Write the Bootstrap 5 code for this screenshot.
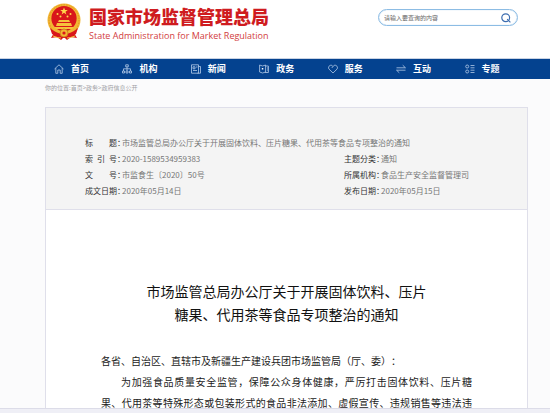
<!DOCTYPE html>
<html lang="zh-CN">
<head>
<meta charset="utf-8">
<meta name="viewport" content="width=device-width, initial-scale=1">
<title>国家市场监督管理总局</title>
<link rel="stylesheet" href="https://cdn.jsdelivr.net/npm/bootstrap@5.3.0/dist/css/bootstrap.min.css">
<style>
body{font-family:"Noto Sans CJK SC",sans-serif;font-size:8px;line-height:16px;color:#222;background:#fbfbfc}
.site-col{margin-left:45px;margin-right:22px}
.site-head{height:58px;background:#fff}
.emblem{width:34px;height:38px;margin:3px 8px 0 2px}
.site-name{font-size:18px;line-height:26px;font-weight:900;color:#cf1b20;margin-top:3px}
.site-en{font-family:"Open Sans",sans-serif;font-size:9px;line-height:13px;color:#d23c3e}
.search-box{width:140px;height:17px;margin:9px 10px 0 0;border:1px solid #8cbce4;box-shadow:inset 0 0 1px #8cbce4;background:#fff;padding:0 6px 0 5px}
.search-box input{font-size:6px;line-height:10px;color:#555;min-width:0}
.search-box input::placeholder{color:#666;opacity:1}
.search-box input:focus{outline:0}
.search-box svg{width:10px;height:10px}
.main-nav{background:#04428f;border-top:1px solid #c9d3e3;height:21px}
.main-nav ul{padding-right:4px}
.main-nav a{font-size:9px;line-height:20px;font-weight:700;color:#fff;padding-left:9px;gap:7px}
.main-nav svg{width:10px;height:10px;fill:none;stroke:#b5cbe8;stroke-width:.8}
.crumbs{font-size:6px;line-height:18px;height:28px;color:#a0a0a4}
.crumbs a{color:inherit}
.doc-box{border:1px solid #dfdfea;border-bottom:0;background:#fff}
.doc-meta{background:#f4f4f4;border-bottom:1px solid #dfdfea;padding:27px 20px 10px 39px}
.doc-meta table{table-layout:fixed}
.doc-meta th,.doc-meta td{padding:0;white-space:nowrap}
.doc-meta th{font-weight:400;color:#333;font-feature-settings:"halt"}
.doc-meta td{color:#777}
.doc-meta .c-key{width:37px}
.doc-meta .c-val{width:222px}
.key-text{display:inline-block;width:32px;text-align-last:justify;vertical-align:top}
.doc-title{font-size:14px;line-height:23px;color:#111;margin:70px 0 24px}
.doc-text{font-size:10px;line-height:21px;color:#222;padding:0 55px;text-spacing-trim:space-all}
.doc-text p{margin:0}
.full-line{text-align-last:justify}
.indented{text-indent:20px}
.status-strip{height:5px;background:#efeff6;border-top:1px solid #dcdce8}
</style>
<script src="https://cdn.jsdelivr.net/npm/bootstrap@5.3.0/dist/js/bootstrap.bundle.min.js"></script>
</head>
<body class="d-flex flex-column vh-100 overflow-hidden">
<header class="flex-shrink-0">
  <div class="site-head">
    <div class="site-col d-flex align-items-start">
      <svg class="emblem flex-shrink-0" viewBox="0 0 34 38" aria-hidden="true">
        <path d="M8 28 4 35 10 34 14 37 17 34 20 37 24 34 30 35 26 28Z" fill="#d8161b"/>
        <ellipse cx="17" cy="17" rx="16.500" ry="16.500" fill="#f2b632"/>
        <ellipse cx="17" cy="17" rx="15" ry="15.200" fill="none" stroke="#d98a1e" stroke-width=".8" stroke-dasharray="1.500 1.200"/>
        <circle cx="17" cy="15.500" r="12.600" fill="#d9161b"/>
        <path d="m17 4.500 1 2.600h2.800l-2.300 1.700.9 2.700-2.400-1.700-2.400 1.700.9-2.700-2.300-1.700H16Z" fill="#ffd84c"/>
        <g fill="#ffd84c"><circle cx="10.500" cy="11" r="1"/><circle cx="13.500" cy="13.500" r="1"/><circle cx="20.500" cy="13.500" r="1"/><circle cx="23.500" cy="11" r="1"/></g>
        <path d="M12 17h10l1 2H11ZM10 20h14l1 3H9ZM7 24h20l-2 2H9Z" fill="#f7c33c"/>
        <path d="M3 25q7 6 14 6t14-6l-2 6q-6 4-12 4T5 31Z" fill="#d9161b"/>
        <circle cx="17" cy="30" r="4" fill="#f2b632" stroke="#c97a18" stroke-width=".8"/>
        <circle cx="17" cy="30" r="1.600" fill="#d9161b"/>
        <path d="M6 33q5 2 8 2M28 33q-5 2-8 2" stroke="#f5c038" stroke-width="1" fill="none"/>
      </svg>
      <div class="text-nowrap">
        <div class="site-name">国家市场监督管理总局</div>
        <div class="site-en">State Administration for Market Regulation</div>
      </div>
      <form class="search-box rounded-pill d-flex align-items-center ms-auto" role="search">
        <input class="border-0 bg-transparent p-0 flex-grow-1" type="search" placeholder="请输入要查询的内容" aria-label="请输入要查询的内容">
        <button class="btn p-0 border-0 d-flex" type="button" aria-label="搜索"><svg viewBox="0 0 10 10" fill="none" stroke="#3c6db0" stroke-width="1.200"><circle cx="4.700" cy="4.700" r="3.900"/><path d="m6.200 6.200 3.200 3.200"/></svg></button>
      </form>
    </div>
  </div>
  <nav class="main-nav" aria-label="主导航">
    <div class="site-col">
      <ul class="nav nav-fill flex-nowrap">
        <li class="col"><a class="d-flex align-items-center text-decoration-none" href="#"><svg viewBox="0 0 10 10"><path d="M.5 5 5 .8 9.500 5M1.800 4v5.300h2V6h2.400v3.300h2V4"/></svg>首页</a></li>
        <li class="col"><a class="d-flex align-items-center text-decoration-none" href="#"><svg viewBox="0 0 10 10"><path d="M3.700.8h2.600v2H3.700ZM5 2.800v4M1.500 7V4.800h7V7M.5 7h2v2h-2ZM4 7h2v2H4ZM7.500 7h2v2h-2Z"/></svg>机构</a></li>
        <li class="col"><a class="d-flex align-items-center text-decoration-none" href="#"><svg viewBox="0 0 10 10"><path d="M.5.8h7v8.400h-7ZM7.500 2.500h2v6.700h-3M2 2.800h2v2H2ZM5 3h1.500M2 6.500h4"/></svg>新闻</a></li>
        <li class="col"><a class="d-flex align-items-center text-decoration-none" href="#"><svg viewBox="0 0 10 10"><path d="m.6 1 3 1 3-1v7l-3 1-3-1ZM6.600 2h2.800v6.500H6M8 4h1.400M8 6h1.400"/><path d="M2.800 4h1.500v1.500H2.800Z" fill="#fff" stroke="none"/></svg>政务</a></li>
        <li class="col"><a class="d-flex align-items-center text-decoration-none" href="#"><svg viewBox="0 0 10 10"><path d="M5 9 1 5.100C-.8 2.800 2.800-.6 5 2.400 7.200-.6 10.800 2.800 9 5.100ZM5 2.400 3.800 4"/></svg>服务</a></li>
        <li class="col"><a class="d-flex align-items-center text-decoration-none" href="#"><svg viewBox="0 0 10 10"><path d="M.5 3.800h9L6.700 1.200M9.500 6.200h-9l2.800 2.600"/></svg>互动</a></li>
        <li class="col"><a class="d-flex align-items-center text-decoration-none" href="#"><svg viewBox="0 0 10 10"><circle cx="2.200" cy="2.500" r="1.500"/><circle cx="2.200" cy="7.500" r="1.500"/><path d="M5.500 1.500h4M5.500 3.800h4M5.500 6.200h4M5.500 8.500h4"/></svg>专题</a></li>
      </ul>
    </div>
  </nav>
</header>
<main class="flex-grow-1 overflow-hidden">
  <div class="site-col">
    <div class="crumbs">你的位置:<a class="text-decoration-none" href="#">首页</a>&gt;<a class="text-decoration-none" href="#">政务</a>&gt;<a class="text-decoration-none" href="#">政府信息公开</a></div>
    <article class="doc-box">
      <div class="doc-meta">
        <table class="w-100">
          <colgroup><col class="c-key"><col class="c-val"><col class="c-key"><col></colgroup>
          <tbody>
            <tr><th scope="row"><span class="key-text">标 题</span>：</th><td colspan="3">市场监管总局办公厅关于开展固体饮料、压片糖果、代用茶等食品专项整治的通知</td></tr>
            <tr><th scope="row"><span class="key-text">索 引 号</span>：</th><td>2020-1589534959383</td><th scope="row"><span class="key-text">主题分类</span>：</th><td>通知</td></tr>
            <tr><th scope="row"><span class="key-text">文 号</span>：</th><td>市监食生〔2020〕50号</td><th scope="row"><span class="key-text">所属机构</span>：</th><td>食品生产安全监督管理司</td></tr>
            <tr><th scope="row"><span class="key-text">成文日期</span>：</th><td>2020年05月14日</td><th scope="row"><span class="key-text">发布日期</span>：</th><td>2020年05月15日</td></tr>
          </tbody>
        </table>
      </div>
      <h1 class="doc-title text-center fw-normal">市场监管总局办公厅关于开展固体饮料、压片<br>糖果、代用茶等食品专项整治的通知</h1>
      <div class="doc-text">
        <p>各省、自治区、直辖市及新疆生产建设兵团市场监管局（厅、委）：</p>
        <p class="full-line indented">为加强食品质量安全监管，保障公众身体健康，严厉打击固体饮料、压片糖<br>果、代用茶等特殊形态或包装形式的食品非法添加、虚假宣传、违规销售等违法违</p>
      </div>
    </article>
  </div>
</main>
<div class="status-strip flex-shrink-0"></div>
</body>
</html>
